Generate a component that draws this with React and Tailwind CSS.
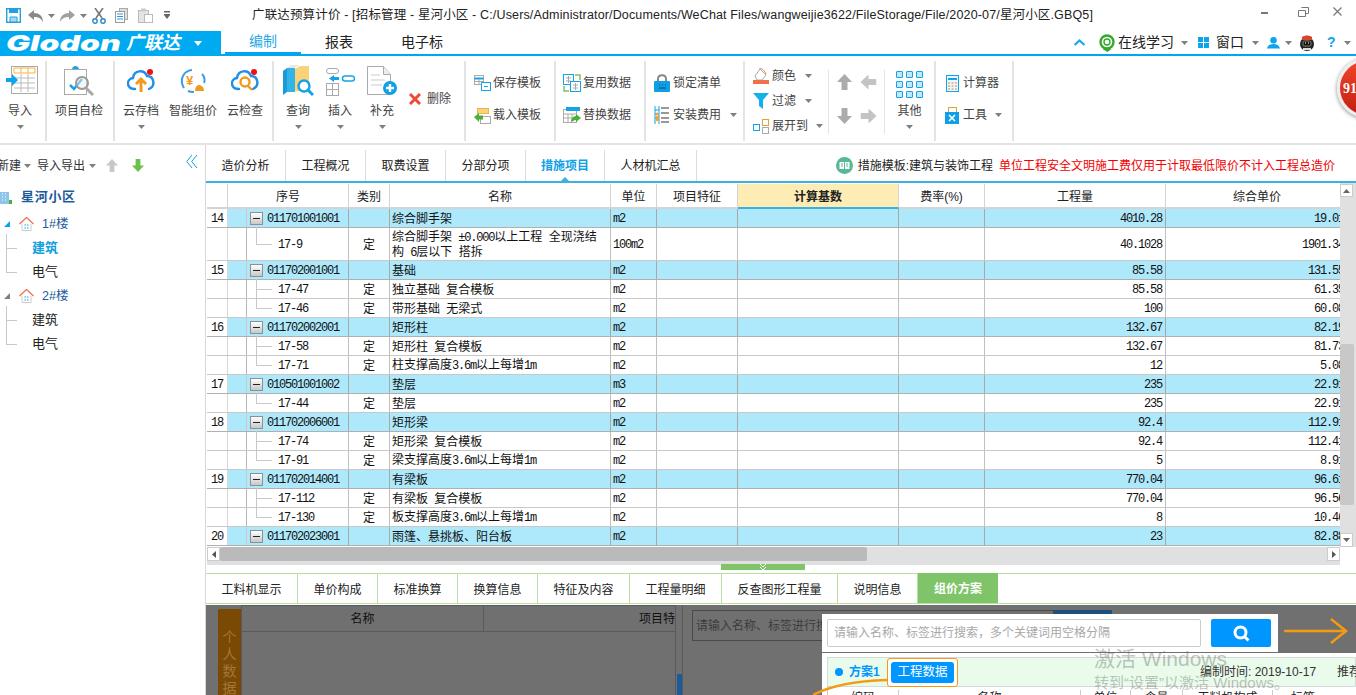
import React from 'react';

const Caret = ({ className = '' }) => (
  <svg width="7" height="4" viewBox="0 0 7 4" className={`shrink-0 ${className}`}><path d="M0 0h7L3.5 4z" fill="#808080" /></svg>
);

const Sep = () => <div className="w-[2px] h-[80px] bg-[#e4e4e4] mt-[5px] shrink-0" />;

const IconImport = () => (
  <svg width="36" height="32" viewBox="0 0 36 32">
    <rect x="9.5" y="1.5" width="26" height="27" fill="#fff" stroke="#aaa" />
    <path d="M12 3h21v5H12z" fill="#fff" stroke="#f5b53c" />
    <path d="M19 3v5M26 3v5" stroke="#f5b53c" />
    <path d="M12 13h21M12 18h21M12 23h21M19 9v18M26 9v18" stroke="#bbb" />
    <path d="M4 13h6v-4l6 6-6 6v-4H4z" fill="#0ca4ec" />
  </svg>
);
const IconCheck = () => (
  <svg width="32" height="30" viewBox="0 0 32 30">
    <rect x="1.5" y="3.5" width="22" height="25" fill="#fff" stroke="#aaa" />
    <path d="M9 3c1-4 6-4 7 0z" fill="#14a3e6" />
    <path d="M7 19l4 4 8-10" fill="none" stroke="#14a3e6" strokeWidth="2.5" />
    <circle cx="19" cy="17" r="6" fill="#eee" fillOpacity=".5" stroke="#999" strokeWidth="2" />
    <path d="M23 22l7 7" stroke="#aaa" strokeWidth="3" />
  </svg>
);
const Cloud = ({ children, dot }) => (
  <svg width="28" height="26" viewBox="0 0 28 26">
    <path d="M8 21c-9 0-9-10-2-11C7 2 17 1 20 8c7 0 9 10 2 13" fill="none" stroke="#1f8fe8" strokeWidth="2.4" strokeLinecap="round" />
    {children}
    {dot && <circle cx="23" cy="4" r="3" fill="#f01010" />}
  </svg>
);
const IconSmart = () => (
  <svg width="28" height="26" viewBox="0 0 28 26">
    <path d="M5 20C0 12 4 3 13 2M23 6c3 3 3 7 2 9M9 23c2 1 4 1 6 1" fill="none" stroke="#3a9be8" strokeWidth="2" />
    <rect x="6" y="5" width="14" height="15" rx="3" fill="#fff" />
    <text x="7" y="17" fontSize="13" fontWeight="700" fill="#f39a1d" fontFamily="Liberation Sans">¥</text>
    <path d="M16 23c0-5 3-6 4-6s5 1 5 6z" fill="#f39a1d" />
  </svg>
);
const IconBook = () => (
  <svg width="32" height="32" viewBox="0 0 32 32">
    <path d="M1 6l4-3v24l-4 3z" fill="#1a9ad6" />
    <rect x="5" y="3" width="8" height="24" fill="#34b4e6" />
    <path d="M13 4l5-3h9v25H13z" fill="#fbd277" />
    <path d="M5 3l4-3h8l-4 3z" fill="#e8e8e8" />
    <circle cx="22" cy="21" r="5.5" fill="#fff" stroke="#14a3e6" strokeWidth="2.4" />
    <path d="M26 25l5 5" stroke="#14a3e6" strokeWidth="3" />
  </svg>
);
const IconInsert = () => (
  <svg width="30" height="30" viewBox="0 0 30 30">
    <rect x="1.5" y="2.5" width="12" height="5" rx="2.5" fill="#fff" stroke="#aaa" />
    <rect x="1.5" y="17.5" width="12" height="12" fill="#fff" stroke="#aaa" />
    <path d="M1.5 23.5h12M7.5 17.5v12" stroke="#aaa" />
    <rect x="17.5" y="10" width="12" height="5" rx="2.5" fill="#fff" stroke="#14a3e6" strokeWidth="1.4" />
    <path d="M4 12.5l5-3.5v2h5v3H9v2z" fill="#14a3e6" />
  </svg>
);
const IconAdd = () => (
  <svg width="32" height="32" viewBox="0 0 32 32">
    <path d="M1.5 1.5h16l7 8v20h-23z" fill="#fff" stroke="#aaa" />
    <path d="M17.5 1.5v8h7" fill="#eee" stroke="#aaa" />
    <path d="M5 10h9M5 15h14M5 20h11" stroke="#ddd" strokeWidth="1.5" />
    <circle cx="24" cy="23" r="7" fill="#10a0e4" />
    <path d="M24 19v8M20 23h8" stroke="#fff" strokeWidth="2.4" />
  </svg>
);

const Big = ({ label, children, caret = true, w }) => (
  <div className={`flex flex-col items-center shrink-0 ${w}`}>
    <div className="h-[34px] mt-[8px] flex items-center justify-center">{children}</div>
    <div className="text-[12px] leading-[16px] mt-[5px] text-[#444] whitespace-nowrap">{label}</div>
    {caret && <Caret className="mt-[6px]" />}
  </div>
);

const TinyTable = ({ tone = '#14a3e6', base = '#aaa' }) => (
  <svg width="17" height="16" viewBox="0 0 17 16">
    <rect x="0.5" y="0.5" width="9" height="9" fill="#fff" stroke={base} />
    <path d="M0.5 3.5h9" stroke={tone} strokeWidth="2" />
    <path d="M5 4v5M1 6.5h8" stroke={base} />
    <rect x="7.5" y="7.5" width="9" height="8" fill="#fff" stroke={tone} />
    <path d="M10 11.5h4" stroke={tone} />
  </svg>
);
const IconLoad = () => (
  <svg width="17" height="17" viewBox="0 0 17 17">
    <rect x="3.5" y="1.5" width="11" height="5" fill="#fbd277" stroke="#e6b84c" />
    <rect x="6.5" y="9.5" width="10" height="7" fill="#fff" stroke="#aaa" />
    <path d="M0 10l5-4v2.500h4v4H5V15z" fill="#4caf3a" />
  </svg>
);
const IconReuse = () => (
  <svg width="18" height="18" viewBox="0 0 18 18">
    <rect x="0.5" y="0.5" width="10" height="10" fill="#fff" stroke="#14a3e6" />
    <path d="M3 4h5M3 7h5M5.500 2v7" stroke="#aaa" />
    <rect x="7.500" y="7.500" width="10" height="10" fill="#fff" stroke="#14a3e6" />
    <path d="M10 11h5M10 14h5M12.500 9v7" stroke="#aaa" />
    <path d="M12 1l5 0v5M1 12v5h5" fill="none" stroke="#7dc25e" strokeWidth="1.5" />
  </svg>
);
const IconReplace = () => (
  <svg width="18" height="18" viewBox="0 0 18 18">
    <rect x="0.500" y="3.500" width="13" height="13" fill="#fff" stroke="#aaa" />
    <path d="M0.500 8h13M0.500 12h13M5 8v8M9 8v8" stroke="#aaa" />
    <path d="M3 1h14v4H3z" fill="#14a3e6" />
    <path d="M8 16c0-4 3-6 5-6V8l5 4-5 4v-2c-2 0-3 1-5 2z" fill="#4caf3a" />
  </svg>
);
const IconLock = () => (
  <svg width="16" height="18" viewBox="0 0 16 18">
    <path d="M4 8V5c0-5 8-5 8 0v3" fill="none" stroke="#888" strokeWidth="2" />
    <rect y="7" width="16" height="11" rx="1" fill="#0f9fe6" />
    <path d="M5 11h1M8 11h1M11 11h1M5 14h7" stroke="#06507a" strokeWidth="1" />
  </svg>
);
const IconInstall = () => (
  <svg width="16" height="18" viewBox="0 0 16 18">
    <path d="M1 0v18M5 0v18" stroke="#14a3e6" />
    <path d="M1 4h4M1 8h4M1 12h4" stroke="#14a3e6" />
    <circle cx="3" cy="8" r="1.500" fill="#f0a040" />
    <path d="M7 2h8M7 7h8M7 12h8M7 16h8" stroke="#777" strokeWidth="1.600" />
    <path d="M2 10h3v5H2z" fill="#f0a040" />
  </svg>
);
const IconColor = () => (
  <svg width="16" height="16" viewBox="0 0 16 16">
    <path d="M7 1l6 6-4 5H4L2 8z" fill="#fff" stroke="#aaa" />
    <path d="M6 0c3 0 6 3 7 6" fill="none" stroke="#f08050" />
    <path d="M0 12h16v4H0z" fill="#f0704a" />
  </svg>
);
const IconFilter = () => (
  <svg width="16" height="16" viewBox="0 0 16 16"><path d="M0 0h16l-6 7v9l-4-3V7z" fill="#14b0ee" /></svg>
);
const IconExpand = () => (
  <svg width="16" height="15" viewBox="0 0 16 15">
    <rect x="0.500" y="5.500" width="6" height="6" fill="#fff" stroke="#14a3e6" />
    <rect x="9.500" y="0.500" width="6" height="6" fill="#fff" stroke="#e0a040" />
    <rect x="9.500" y="8.500" width="6" height="6" fill="#fff" stroke="#aaa" />
  </svg>
);
const IconCalc = () => (
  <svg width="13" height="17" viewBox="0 0 13 17">
    <rect x="0.500" y="0.500" width="12" height="16" fill="#eaf7fd" stroke="#14a3e6" />
    <path d="M2 4h9" stroke="#14a3e6" strokeWidth="2" />
    <path d="M2 8h2M5.500 8h2M9 8h2M2 11h2M5.500 11h2M9 11h2M2 14h2M5.500 14h2M9 14h2" stroke="#e08040" />
  </svg>
);
const IconTools = () => (
  <svg width="14" height="17" viewBox="0 0 14 17">
    <rect x="3.500" y="0.500" width="8" height="6" fill="#fff" stroke="#e0a040" />
    <rect y="5" width="14" height="12" fill="#0f9fe6" />
    <path d="M4 8l6 6M10 8l-6 6" stroke="#fff" strokeWidth="1.600" />
  </svg>
);
const UpArrow = ({ fill = '#ababab', rotate = '' }) => (
  <svg width="15" height="16" viewBox="0 0 15 16" className={rotate}><path d="M7.500 0l7.500 8h-4.500v8h-6V8H0z" fill={fill} /></svg>
);

const Small = ({ icon, label, caret, caretGap = 'ml-[9px]' }) => (
  <div className="flex items-center h-[18px] whitespace-nowrap">
    <div className="w-[18px] flex justify-center">{icon}</div>
    <span className="ml-[2px] text-[12px] text-[#444]">{label}</span>
    {caret && <Caret className={caretGap} />}
  </div>
);

const Ribbon = () => (
  <div className="h-[89px] border-b-2 border-[#e4e4e4] flex bg-white overflow-hidden">
    <Big label="导入" w="w-[40px]"><IconImport /></Big>
    <div className="ml-[5px]"><Sep /></div>
    <Big label="项目自检" caret={false} w="w-[64px] mr-[2px]"><IconCheck /></Big>
    <Sep />
    <Big label="云存档" w="w-[52px]">
      <Cloud dot><path d="M14 24V13M9 16l5-5 5 5" fill="none" stroke="#f39a1d" strokeWidth="3" /></Cloud>
    </Big>
    <Big label="智能组价" caret={false} w="w-[52px]"><IconSmart /></Big>
    <Big label="云检查" caret={false} w="w-[52px]">
      <Cloud dot><circle cx="14" cy="14" r="4.500" fill="none" stroke="#f39a1d" strokeWidth="2.400" /><path d="M17 18l4 4" stroke="#f39a1d" strokeWidth="2.400" /></Cloud>
    </Big>
    <div className="ml-[1px]"><Sep /></div>
    <Big label="查询" w="w-[48px]"><IconBook /></Big>
    <Big label="插入" w="w-[36px]"><IconInsert /></Big>
    <Big label="补充" w="w-[48px]"><IconAdd /></Big>
    <div className="flex items-center h-[18px] mt-[34px] pl-[3px] w-[58px] shrink-0">
      <svg width="12" height="12" viewBox="0 0 12 12"><path d="M1 1l10 10M11 1L1 11" stroke="#ee4a3a" strokeWidth="3" /></svg>
      <span className="ml-[6px] text-[12px] text-[#444]">删除</span>
    </div>
    <Sep />
    <div className="w-[88px] shrink-0 flex flex-col gap-[14px] pt-[18px] pl-[7px]">
      <Small icon={<TinyTable />} label="保存模板" />
      <Small icon={<IconLoad />} label="载入模板" />
    </div>
    <Sep />
    <div className="w-[88px] shrink-0 flex flex-col gap-[14px] pt-[18px] pl-[7px]">
      <Small icon={<IconReuse />} label="复用数据" />
      <Small icon={<IconReplace />} label="替换数据" />
    </div>
    <Sep />
    <div className="w-[97px] shrink-0 flex flex-col gap-[14px] pt-[18px] pl-[7px]">
      <Small icon={<IconLock />} label="锁定清单" />
      <Small icon={<IconInstall />} label="安装费用" caret />
    </div>
    <Sep />
    <div className="w-[83px] shrink-0 flex flex-col gap-[7px] pt-[11px] pl-[7px]">
      <Small icon={<IconColor />} label="颜色" caret />
      <Small icon={<IconFilter />} label="过滤" caret />
      <Small icon={<IconExpand />} label="展开到" caret caretGap="ml-[8px]" />
    </div>
    <div className="w-[1px] h-[64px] bg-[#e4e4e4] mt-[14px] shrink-0" />
    <div className="w-[55px] shrink-0 grid grid-cols-2 gap-y-[16px] pt-[18px] pl-[8px] h-[70px]">
      <UpArrow />
      <UpArrow rotate="-rotate-90" fill="#c4c4c4" />
      <UpArrow rotate="rotate-180" />
      <UpArrow rotate="rotate-90" fill="#c4c4c4" />
    </div>
    <div className="w-[1px] h-[64px] bg-[#e4e4e4] mt-[14px] shrink-0" />
    <div className="w-[49px] shrink-0 flex flex-col items-center">
      <div className="grid grid-cols-3 gap-x-[3px] gap-y-[3px] mt-[15px]">
        {[0, 1, 2, 3, 4, 5, 6, 7, 8].map((i) => (
          <div key={i} className="w-[7px] h-[7px] border border-[#14a3e6] rounded-[1px] bg-[#bfe8f8]" />
        ))}
      </div>
      <div className="text-[12px] leading-[16px] text-[#444] mt-[5px]">其他</div>
      <Caret className="mt-[6px]" />
    </div>
    <Sep />
    <div className="w-[76px] shrink-0 flex flex-col gap-[14px] pt-[18px] pl-[7px]">
      <Small icon={<IconCalc />} label="计算器" />
      <Small icon={<IconTools />} label="工具" caret caretGap="ml-[8px]" />
    </div>
    <Sep />
  </div>
);

const TitleBar = () => (
  <div className="h-[31px] flex items-center relative bg-white">
    <div className="w-[252px] flex items-center pl-[6px] shrink-0">
      <svg width="15" height="15" viewBox="0 0 15 15"><rect x="0.700" y="0.700" width="13.600" height="13.600" fill="#fff" stroke="#22a0dd" strokeWidth="1.400" /><path d="M3 1v4h9V1z" fill="#22a0dd" /><path d="M4 9h7v5H4z" fill="#a8d8ef" stroke="#22a0dd" /></svg>
      <svg width="15" height="12" viewBox="0 0 15 12" className="ml-[7px]"><path d="M0 5l6-5v3c5 0 9 3 9 9-2-4-5-5-9-5v3z" fill="#8a8a8a" /></svg>
      <Caret className="ml-[5px]" />
      <svg width="15" height="12" viewBox="0 0 15 12" className="ml-[5px]"><path d="M15 5L9 0v3C4 3 0 6 0 12c2-4 5-5 9-5v3z" fill="#a0a0a0" /></svg>
      <Caret className="ml-[5px]" />
      <svg width="14" height="16" viewBox="0 0 14 16" className="ml-[5px]"><path d="M3 0l7 10M11 0L4 10" stroke="#777" strokeWidth="1.600" /><circle cx="3" cy="13" r="2.200" fill="none" stroke="#2a86c8" strokeWidth="1.400" /><circle cx="11" cy="13" r="2.200" fill="none" stroke="#2a86c8" strokeWidth="1.400" /></svg>
      <svg width="15" height="15" viewBox="0 0 15 15" className="ml-[9px]"><rect x="4.500" y="0.500" width="8" height="11" fill="#ddd" stroke="#aaa" /><rect x="0.500" y="3.500" width="9" height="11" fill="#fff" stroke="#999" /><path d="M2 6h6M2 8.500h6M2 11h6" stroke="#2a9ad6" /></svg>
      <svg width="15" height="15" viewBox="0 0 15 15" className="ml-[8px]"><rect x="0.500" y="2.500" width="10" height="12" fill="#e4e4e4" stroke="#bbb" /><rect x="3" y="0.500" width="5" height="3" fill="#ccc" /><rect x="6.500" y="6.500" width="8" height="8" fill="#fff" stroke="#bbb" /></svg>
      <svg width="6" height="9" viewBox="0 0 6 9" className="ml-[11px]"><path d="M0 0h6v1.500H0zM0 3h6v1H0zM0 4h6L3 8z" fill="#666" /></svg>
    </div>
    <div className="text-[12.500px] tracking-[0.150px] text-[#222] whitespace-nowrap">广联达预算计价 - [招标管理 - 星河小区 - C:/Users/Administrator/Documents/WeChat Files/wangweijie3622/FileStorage/File/2020-07/星河小区.GBQ5]</div>
    <div className="ml-auto flex items-center pr-[14px] -mt-[8px]">
      <div className="w-[7px] h-[2px] bg-[#777] mt-[2px]" />
      <svg width="11" height="10" viewBox="0 0 11 10" className="ml-[30px]"><path d="M3.500 0.500h7v6h-3M0.500 3.500h7v6h-7z" fill="none" stroke="#777" /></svg>
      <svg width="9" height="9" viewBox="0 0 9 9" className="ml-[24px]"><path d="M0.500 0.500l8 8M8.500 0.500l-8 8" stroke="#777" strokeWidth="1.200" /></svg>
    </div>
  </div>
);

const NavBar = () => (
  <div className="h-[25px] flex bg-white border-b-[2px] border-[#00a7f0] relative">
    <div className="w-[221px] h-[25px] bg-[#00aaf0] flex items-center pl-[6px] text-white shrink-0">
      <span className="inline-block w-[115px] origin-left scale-x-[1.45] italic font-black text-[22px] leading-[23px] font-['Inter',sans-serif]">Glodon</span>
      <span className="text-[18px] font-bold italic leading-[23px] ml-[5px]">广联达</span>
      <svg width="8" height="5" viewBox="0 0 8 5" className="ml-[14px]"><path d="M0 0h8L4 5z" fill="#fff" /></svg>
    </div>
    <div className="ml-[4px] w-[76px] h-[23px] flex justify-center items-center text-[14px] text-[#2aa7e6] border-b-2 border-[#00a7f0]">编制</div>
    <div className="w-[76px] h-[23px] flex justify-center items-center text-[14px] text-[#222]">报表</div>
    <div className="w-[90px] h-[23px] flex justify-center items-center text-[14px] text-[#222]">电子标</div>
    <div className="ml-auto flex items-center h-[23px] pr-[5px]">
      <svg width="11" height="7" viewBox="0 0 11 7"><path d="M0.500 6l5-4.500 5 4.500" fill="none" stroke="#1da8e8" strokeWidth="2.200" /></svg>
      <svg width="18" height="18" viewBox="0 0 17 18" className="ml-[13px]"><circle cx="8.500" cy="8" r="6.500" fill="none" stroke="#33aa2a" strokeWidth="2.400" /><circle cx="8.500" cy="8" r="3" fill="none" stroke="#33aa2a" strokeWidth="1.400" /><path d="M4 15c3-2 6-2 9 0l-4 3z" fill="#33aa2a" /></svg>
      <span className="ml-[2px] text-[14px] text-[#222]">在线学习</span>
      <Caret className="ml-[7px]" />
      <div className="ml-[10px] grid grid-cols-2 gap-[1px]">
        <div className="w-[5px] h-[5px] bg-[#0ca4ec]" /><div className="w-[5px] h-[5px] bg-[#0ca4ec]" />
        <div className="w-[5px] h-[5px] bg-[#0ca4ec]" /><div className="w-[5px] h-[5px] bg-[#0ca4ec]" />
      </div>
      <span className="ml-[7px] text-[14px] text-[#222]">窗口</span>
      <Caret className="ml-[8px]" />
      <svg width="13" height="13" viewBox="0 0 14 13" className="ml-[8px]"><circle cx="7" cy="4" r="3.500" fill="#0ca4ec" /><path d="M0 13c1-4 4-5 7-5s6 1 7 5z" fill="#0ca4ec" /></svg>
      <Caret className="ml-[5px]" />
      <svg width="16" height="16" viewBox="0 0 16 16" className="ml-[7px]"><circle cx="8" cy="9" r="7" fill="#222" /><path d="M3 2c3-2 7-2 10 0v3H3z" fill="#d8452e" /><rect x="4" y="6" width="8" height="5" rx="1.500" fill="#111" stroke="#888" /><path d="M6 8h1M9 8h1" stroke="#e8c840" strokeWidth="1.400" /><path d="M4 14h8" stroke="#ddd" strokeWidth="2" /></svg>
      <span className="ml-[12px] text-[14px] font-bold text-[#0ca4ec] w-[9px]">?</span>
      <Caret className="ml-[8px]" />
    </div>
  </div>
);

const House = () => (
  <svg width="15" height="14" viewBox="0 0 15 14">
    <path d="M0.500 7l7-6.500 7 6.500" fill="none" stroke="#f07858" strokeWidth="1.400" />
    <path d="M3 7v6.500h9V7" fill="#fff" stroke="#ccc" />
    <path d="M5.500 7h4v5h-4z" fill="#8ed0f0" />
    <path d="M7.500 7v5M5.500 9.500h4" stroke="#fff" />
  </svg>
);

const TreeChild = ({ label, active, first }) => (
  <div className="h-[24px] flex items-center relative">
    <div className={`absolute left-[6px] w-[11px] border-l border-b border-[#c8c8c8] ${first ? 'top-[-2px] h-[15px]' : 'top-[-12px] h-[25px]'}`} />
    <span className={`ml-[32px] text-[13px] ${active ? 'font-bold text-[#10a0dc]' : 'text-[#222]'}`}>{label}</span>
  </div>
);

const Sidebar = () => (
  <div className="w-[206px] shrink-0 border-r border-[#d8d8d8] bg-white overflow-hidden">
    <div className="h-[31px] pt-[10px] flex items-center relative">
      <span className="text-[12px] text-[#333] -ml-[3px] whitespace-nowrap">新建</span>
      <Caret className="ml-[3px]" />
      <span className="text-[12px] text-[#333] ml-[6px] whitespace-nowrap">导入导出</span>
      <Caret className="ml-[4px]" />
      <div className="ml-[10px]"><svg width="12" height="13" viewBox="0 0 15 16"><path d="M7.500 0l7.500 8h-4.500v8h-6V8H0z" fill="#c8c8c8" /></svg></div>
      <div className="ml-[14px]"><svg width="12" height="13" viewBox="0 0 15 16"><path d="M7.500 16l7.500-8h-4.500V0h-6v8H0z" fill="#6fc04a" /></svg></div>
      <svg width="12" height="13" viewBox="0 0 12 13" className="absolute left-[186px] top-[10px]"><path d="M6 0L0.700 6.500 6 13M11 0L5.700 6.500 11 13" fill="none" stroke="#16a0dc" /></svg>
    </div>
    <div className="h-[24px] mt-[9px] flex items-center">
      <svg width="12" height="14" viewBox="0 0 12 14"><path d="M0 2h9v12H0z" fill="#8cc4ea" /><path d="M2 4h1M5 4h1M2 7h1M5 7h1M2 10h1M5 10h1" stroke="#fff" /><path d="M9 10h3v4H9z" fill="#4caf3a" /></svg>
      <span className="ml-[9px] text-[13px] font-bold tracking-[0.700px] text-[#1d5a9c]">星河小区</span>
    </div>
    <div className="h-[24px] mt-[3px] flex items-center">
      <svg width="6" height="6" viewBox="0 0 6 6" className="ml-[4px]"><path d="M6 0v6H0z" fill="#0ca4ec" /></svg>
      <div className="ml-[9px]"><House /></div>
      <span className="ml-[8px] text-[12.500px] text-[#1d5a9c]">1#楼</span>
    </div>
    <TreeChild label="建筑" active first />
    <TreeChild label="电气" />
    <div className="h-[24px] flex items-center">
      <svg width="6" height="6" viewBox="0 0 6 6" className="ml-[4px]"><path d="M6 0v6H0z" fill="#808080" /></svg>
      <div className="ml-[9px]"><House /></div>
      <span className="ml-[8px] text-[12.500px] text-[#1d5a9c]">2#楼</span>
    </div>
    <TreeChild label="建筑" first />
    <TreeChild label="电气" />
  </div>
);

const topTabs = [
  ['造价分析', 'w-[80px]'], ['工程概况', 'w-[80px]'], ['取费设置', 'w-[80px]'], ['分部分项', 'w-[80px]'],
  ['措施项目', 'w-[79px]', true], ['人材机汇总', 'w-[92px]'],
];

const TopTabs = () => (
  <div className="h-[38px] flex items-end border-b-[2px] border-[#3db0e0] bg-white">
    <div className="flex h-[31px]">
      {topTabs.map(([t, w, act]) => (
        <div key={t} className={`${w} flex items-center justify-center text-[12px] border-r border-[#dcdcdc] relative ${act ? 'font-bold text-[#10a0e8]' : 'text-[#222]'}`}>
          {t}
          {act && (
            <svg width="8" height="4" viewBox="0 0 8 4" className="absolute left-1/2 -ml-[4px] bottom-0"><path d="M4 0l4 4H0z" fill="#3db0e0" /></svg>
          )}
        </div>
      ))}
    </div>
    <div className="ml-auto h-[31px] flex items-center pr-[21px]">
      <svg width="17" height="17" viewBox="0 0 17 17"><circle cx="8.500" cy="8.500" r="8.500" fill="#56b894" /><path d="M3.500 5h4.500v7H3.500zM9 5h4.500v7H9z" fill="#fff" /><path d="M5 7h2M5 9h2M10 7h2M10 9h2" stroke="#56b894" /></svg>
      <span className="ml-[5px] text-[12px] text-[#222] whitespace-nowrap">措施模板:建筑与装饰工程</span>
      <span className="ml-[6px] text-[12px] text-[#f00000] whitespace-nowrap">单位工程安全文明施工费仅用于计取最低限价不计入工程总造价</span>
    </div>
  </div>
);

const rows = [
  { n: 14, c: '011701001001', name: '综合脚手架', u: 'm2', q: '4010.28', p: '19.01' },
  { c: '17-9', t: '定', name: '综合脚手架 ±0.000以上工程 全现浇结\n构 6层以下 搭拆', u: '100m2', q: '40.1028', p: '1901.34', tall: true },
  { n: 15, c: '011702001001', name: '基础', u: 'm2', q: '85.58', p: '131.55' },
  { c: '17-47', t: '定', name: '独立基础 复合模板', u: 'm2', q: '85.58', p: '61.35' },
  { c: '17-46', t: '定', name: '带形基础 无梁式', u: 'm2', q: '100', p: '60.08' },
  { n: 16, c: '011702002001', name: '矩形柱', u: 'm2', q: '132.67', p: '82.19' },
  { c: '17-58', t: '定', name: '矩形柱 复合模板', u: 'm2', q: '132.67', p: '81.73' },
  { c: '17-71', t: '定', name: '柱支撑高度3.6m以上每增1m', u: 'm2', q: '12', p: '5.08' },
  { n: 17, c: '010501001002', name: '垫层', u: 'm3', q: '235', p: '22.91' },
  { c: '17-44', t: '定', name: '垫层', u: 'm2', q: '235', p: '22.91' },
  { n: 18, c: '011702006001', name: '矩形梁', u: 'm2', q: '92.4', p: '112.91' },
  { c: '17-74', t: '定', name: '矩形梁 复合模板', u: 'm2', q: '92.4', p: '112.41' },
  { c: '17-91', t: '定', name: '梁支撑高度3.6m以上每增1m', u: 'm2', q: '5', p: '8.91' },
  { n: 19, c: '011702014001', name: '有梁板', u: 'm2', q: '770.04', p: '96.61' },
  { c: '17-112', t: '定', name: '有梁板 复合模板', u: 'm2', q: '770.04', p: '96.56' },
  { c: '17-130', t: '定', name: '板支撑高度3.6m以上每增1m', u: 'm2', q: '8', p: '10.46' },
  { n: 20, c: '011702023001', name: '雨篷、悬挑板、阳台板', u: 'm2', q: '23', p: '82.88' },
];

const mono = "font-['Liberation_Mono',monospace] tracking-[-1.200px] relative top-[1px]";

const Minus = () => (
  <div className="w-[13px] h-[13px] border border-[#909090] bg-gradient-to-b from-white to-[#c8c8c8] flex items-center justify-center shrink-0">
    <div className="w-[7px] h-[1px] bg-[#222]" />
  </div>
);

const NameText = ({ text }) => (
  <span className="whitespace-pre-line [word-spacing:3px]">
    {text.split(/([A-Za-z0-9.±]+)/).map((s, i) =>
      i % 2 === 1 ? <span key={i} className="font-['Liberation_Mono',monospace] tracking-[-1.200px]">{s}</span> : s
    )}
  </span>
);

const Row = ({ r, last }) => {
  const head = r.n !== undefined;
  const bg = head ? 'bg-[#aee8fb]' : 'bg-white';
  const line = head ? 'border-[#a8a8a8]' : 'border-[#c0c0c0]';
  const cell = `border-r ${line} flex items-center shrink-0 h-full`;
  return (
    <div className={`flex ${r.tall ? 'h-[33px]' : 'h-[19px]'} border-b ${head ? 'border-[#b0b0b0]' : 'border-[#c8c8c8]'} text-[#111] text-[12px]`}>
      <div className="w-[21px] bg-white border-r border-[#d8d8d8] flex items-center shrink-0 h-full pl-[4px]"><span className={mono}>{r.n}</span></div>
      <div className={`w-[121px] ${cell} ${bg} relative`}>
        <div className={`absolute left-[18px] top-0 bottom-0 border-l ${head ? 'border-[#c8c8c8]' : 'border-[#b8b8b8]'}`} />
        {head ? (
          <div className="flex items-center ml-[22px] relative"><Minus /><span className={`ml-[4px] ${mono}`}>{r.c}</span></div>
        ) : (
          <div className="flex items-center ml-[28px]">
            <div className={`absolute left-[28px] top-[-1px] border-l border-[#c8c8c8] ${last ? 'h-[calc(50%+1px)]' : 'h-[calc(100%+1px)]'}`} />
            <div className="w-[16px] h-[1px] bg-[#c8c8c8]" />
            <span className={`ml-[6px] ${mono}`}>{r.c}</span>
          </div>
        )}
      </div>
      <div className={`w-[41px] ${cell} ${bg} justify-center pt-[2px]`}>{r.t}</div>
      <div className={`w-[221px] ${cell} ${bg} pl-[2px] pt-[1px] ${r.tall ? 'leading-[14px]' : 'whitespace-nowrap'}`}><NameText text={r.name} /></div>
      <div className={`w-[46px] ${cell} ${bg} pl-[2px]`}><span className={mono}>{r.u}</span></div>
      <div className={`w-[81px] ${cell} ${bg}`} />
      <div className={`w-[161px] ${cell} ${bg}`} />
      <div className={`w-[86px] ${cell} ${bg}`} />
      <div className={`w-[181px] ${cell} ${bg} justify-end pr-[3px]`}><span className={mono}>{r.q}</span></div>
      <div className={`w-[183px] ${cell} ${bg} justify-end pr-[4px]`}><span className={mono}>{r.p}</span></div>
    </div>
  );
};

const headers = [
  ['', 'w-[21px]'], ['序号', 'w-[121px]'], ['类别', 'w-[41px]'], ['名称', 'w-[221px]'], ['单位', 'w-[46px]'],
  ['项目特征', 'w-[81px]'], ['计算基数', 'w-[161px]', true], ['费率(%)', 'w-[86px]'], ['工程量', 'w-[181px]'], ['综合单价', 'w-[183px]'],
];

const Scrollbar = () => (
  <div className="w-[16px] shrink-0 bg-[#e0e0e0] relative">
    <div className="absolute left-0 top-[1px] w-[13px] h-[13px] bg-white border border-[#ccc] flex items-center justify-center">
      <svg width="7" height="4" viewBox="0 0 7 4"><path d="M3.500 0L7 4H0z" fill="#666" /></svg>
    </div>
    <div className="absolute left-0 top-[161px] h-[161px] w-[14px] bg-[#c8c8c8] rounded-[2px]" />
    <div className="absolute left-0 bottom-[0px] w-[13px] h-[14px] bg-white border border-[#ccc] flex items-center justify-center">
      <svg width="7" height="4" viewBox="0 0 7 4"><path d="M0 0h7L3.500 4z" fill="#666" /></svg>
    </div>
  </div>
);

const Grid = () => (
  <div className="flex h-[364px] ml-[1px]">
    <div className="w-[1133px] overflow-hidden">
      <div className="w-[1142px]">
        <div className="flex h-[26px] border-b-2 border-[#d4d4d4] pt-[1px]">
          {headers.map(([t, w, act]) => (
            <div key={w + t} className={`${w} shrink-0 border-r border-[#d4d4d4] flex items-center justify-center pt-[2px] text-[12px] text-[#222] ${act ? 'bg-[#fdecb4] font-bold border-b-2 border-b-[#3db0e0] -mb-[2px]' : 'bg-white'}`}>{t}</div>
          ))}
        </div>
        {rows.map((r, i) => <Row key={i} r={r} last={rows[i + 1] === undefined || rows[i + 1].n !== undefined} />)}
      </div>
    </div>
    <Scrollbar />
  </div>
);

const HScroll = () => (
  <div className="h-[18px] flex ml-[1px]">
    <div className="w-[1133px] bg-[#e0e0e0] h-[18px] flex items-start">
      <div className="w-[13px] h-[14px] bg-white border border-[#ccc] flex items-center justify-center shrink-0">
        <svg width="4" height="7" viewBox="0 0 4 7"><path d="M4 0v7L0 3.500z" fill="#555" /></svg>
      </div>
      <div className="w-[647px] h-[14px] bg-[#bababa] rounded-[2px]" />
      <div className="ml-auto w-[13px] h-[14px] bg-white border border-[#ccc] flex items-center justify-center shrink-0">
        <svg width="4" height="7" viewBox="0 0 4 7"><path d="M0 0v7l4-3.500z" fill="#555" /></svg>
      </div>
    </div>
  </div>
);

const bottomTabs = [
  ['工料机显示', 'w-[92px]'], ['单价构成', 'w-[80px]'], ['标准换算', 'w-[80px]'], ['换算信息', 'w-[80px]'], ['特征及内容', 'w-[92px]'],
  ['工程量明细', 'w-[92px]'], ['反查图形工程量', 'w-[116px]'], ['说明信息', 'w-[80px]'],
];

const BottomTabs = () => (
  <div className="h-[32px] mt-[8px] pb-[1px] bg-white">
    <div className="h-full flex border-t border-b border-[#b8e0a0]">
      {bottomTabs.map(([t, w]) => (
        <div key={t} className={`${w} flex items-center justify-center pt-[2px] text-[12px] text-[#222] border-r border-[#b8e0a0]`}>{t}</div>
      ))}
      <div className="w-[80px] -mt-[1px] flex items-center justify-center pt-[2px] text-[12px] font-bold text-white bg-[#80c46a]">组价方案</div>
    </div>
  </div>
);

const Splitter = () => (
  <div className="absolute left-[515px] top-[419px] w-[84px] h-[6px] bg-[#80c46a] flex justify-center">
    <svg width="8" height="6" viewBox="0 0 8 6"><path d="M1 0l3 3 3-3M1 3l3 3 3-3" fill="none" stroke="#fff" /></svg>
  </div>
);

const DarkPanel = () => (
  <div className="flex-1 bg-[#707070] flex overflow-hidden min-h-0 text-[12px]">
    <div className="w-[12px] shrink-0" />
    <div className="w-[23px] mt-[4px] bg-[#7a4a05] rounded-tl-[2px] text-[#a3763a] text-[14px] leading-[17px] flex flex-col items-center pt-[20px] shrink-0">
      <span>个</span><span>人</span><span>数</span><span>据</span>
    </div>
    <div className="w-[435px] shrink-0 border-l border-t border-r border-[#5a5a5a]">
      <div className="h-[26px] border-b border-[#5a5a5a] flex text-[#111]">
        <div className="w-[242px] border-r border-[#5a5a5a] flex items-center justify-center">名称</div>
        <div className="flex-1 flex items-center justify-end whitespace-nowrap overflow-hidden">项目特</div>
      </div>
    </div>
    <div className="w-[7px] shrink-0 relative border-r border-[#5a5a5a]">
      <div className="absolute left-[1px] top-[69px] w-[5px] h-[30px] bg-[#1d5a9c]" />
    </div>
    <div className="w-[420px] ml-[9px] mt-[5px] h-[31px] border border-[#4a4a4a] flex items-center pl-[3px] text-[#3c3c3c] relative">
      <span className="whitespace-nowrap">请输入名称、标签进行搜</span>
      <div className="absolute right-0 -top-[1px] w-[58px] h-[5px] bg-[#1d4e80]" />
    </div>
  </div>
);

const Overlay = () => (
  <>
    <div className="absolute left-[822px] top-[614px] w-[456px] h-[38px] bg-white flex items-center pl-[5px]">
      <div className="w-[374px] h-[28px] border border-[#ccc] rounded-[2px] flex items-center pl-[6px] text-[12px] text-[#a8a8a8] whitespace-nowrap">请输入名称、标签进行搜索，多个关键词用空格分隔</div>
      <div className="ml-[10px] w-[60px] h-[28px] bg-[#0096ff] rounded-[2px] flex items-center justify-center">
        <svg width="17" height="17" viewBox="0 0 17 17"><circle cx="7.500" cy="7.500" r="5.500" fill="none" stroke="#fff" strokeWidth="3" /><path d="M11.500 11.500l4 4" stroke="#fff" strokeWidth="3" /></svg>
      </div>
    </div>
    <svg width="72" height="26" viewBox="0 0 72 26" className="absolute left-[1284px] top-[618px]">
      <path d="M1 13h60" stroke="#f59a13" strokeWidth="2.500" strokeLinecap="round" />
      <path d="M47 1l15 12-15 12" fill="none" stroke="#f59a13" strokeWidth="2.500" />
    </svg>
    <div className="absolute left-[822px] top-[653px] w-[534px] h-[42px] bg-white pl-[5px] pt-[4px]">
      <div className="h-[30px] bg-[#e9fbea] border border-[#d8d8d8] flex items-center text-[12px] relative">
        <div className="ml-[7px] w-[8px] h-[8px] rounded-full bg-[#0096ff]" />
        <span className="ml-[6px] font-bold text-[#0096ff] whitespace-nowrap">方案1</span>
        <span className="absolute left-[372px] text-[12px] text-[#333] whitespace-nowrap">编制时间: 2019-10-17</span>
        <span className="absolute left-[509px] text-[12px] text-[#333] whitespace-nowrap">推荐</span>
      </div>
      <div className="flex h-[8px] overflow-hidden border-l border-[#ccc] text-[12px] text-[#222] leading-[16px] whitespace-nowrap pt-[3px]">
        <div className="w-[71px] border-r border-[#ccc] text-center">编码</div>
        <div className="w-[182px] border-r border-[#ccc] text-center">名称</div>
        <div className="w-[50px] border-r border-[#ccc] text-center">单位</div>
        <div className="w-[52px] border-r border-[#ccc] text-center">含量</div>
        <div className="w-[90px] border-r border-[#ccc] text-center">工料机构成</div>
        <div className="w-[60px] text-center">标签</div>
      </div>
    </div>
    <div className="absolute left-[887px] top-[658px] w-[71px] h-[29px] bg-white border border-[#f59a13] rounded-[3px] flex items-center justify-center">
      <div className="w-[63px] h-[21px] bg-[#0096ff] rounded-[3px] flex items-center justify-center text-[12.500px] text-white">工程数据</div>
    </div>
    <svg width="75" height="20" viewBox="0 0 75 20" className="absolute left-[813px] top-[675px]">
      <path d="M0 20C15 12 40 6 74 5" fill="none" stroke="#f59a13" strokeWidth="2.500" />
    </svg>
    <div className="absolute left-[1094px] top-[646px] text-[21px] leading-[26px] text-[#666]/40 whitespace-nowrap">激活 Windows</div>
    <div className="absolute left-[1094px] top-[674px] text-[15px] leading-[18px] text-[#666]/40 whitespace-nowrap">转到“设置”以激活 Windows。</div>
    <div className="absolute left-[1337px] top-[58px] w-[60px] h-[60px] rounded-full bg-gradient-to-b from-[#f0452a] to-[#c41c10] border-[3px] border-[#eee] shadow-[0_1px_4px_#888] flex items-center pl-[3px]">
      <span className="text-white font-bold text-[14px] font-['Liberation_Serif',serif]">91</span>
    </div>
  </>
);

export default function App() {
  return (
    <div className="w-[1356px] h-[695px] relative overflow-hidden bg-white flex flex-col font-['Liberation_Sans','Noto_Sans_CJK_SC',sans-serif] text-[#222]">
      <TitleBar />
      <NavBar />
      <Ribbon />
      <div className="flex-1 flex min-h-0">
        <Sidebar />
        <div className="flex-1 flex flex-col min-w-0 relative">
          <TopTabs />
          <Grid />
          <HScroll />
          <Splitter />
          <BottomTabs />
          <DarkPanel />
        </div>
      </div>
      <Overlay />
    </div>
  );
}
